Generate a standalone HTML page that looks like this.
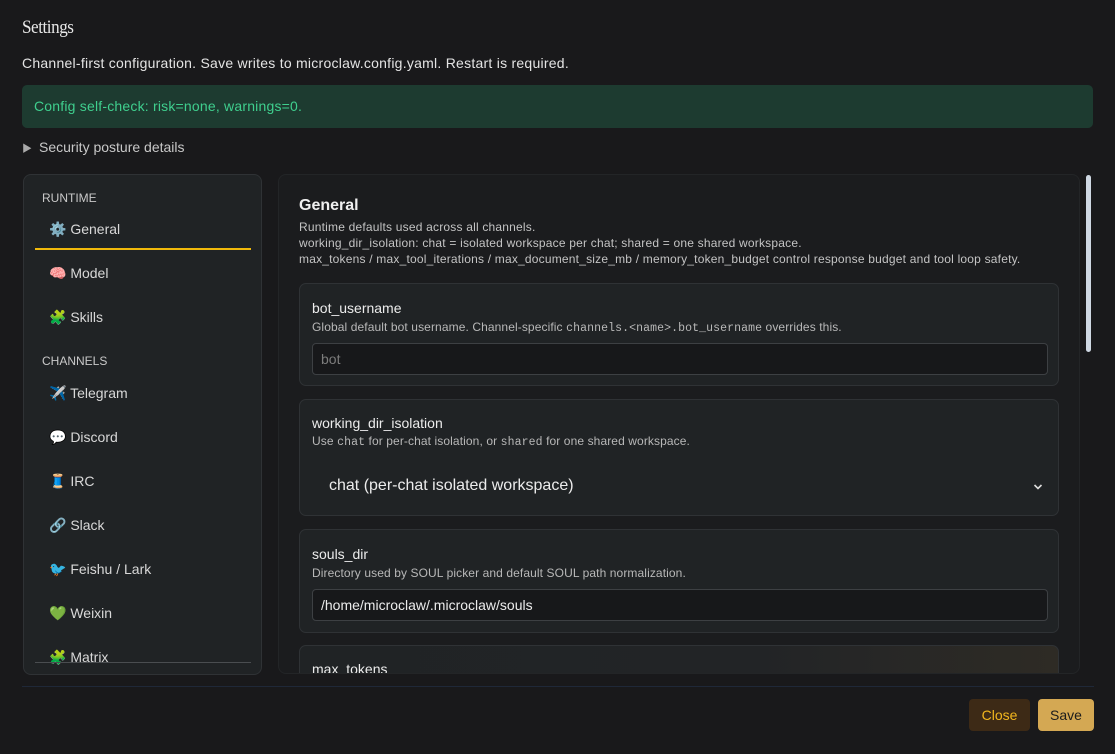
<!DOCTYPE html>
<html><head><meta charset="utf-8"><style>
*{box-sizing:border-box;margin:0;padding:0}
body{width:1115px;height:754px;background:#19191b;font-family:"Liberation Sans","Noto Sans CJK SC",sans-serif;color:#e6e6e6;position:relative;overflow:hidden}
.a{position:absolute}
.title{left:22px;top:17px;font-family:"Liberation Serif",serif;font-size:19px;color:#e8e8e8;letter-spacing:-0.5px;transform:scaleX(0.9);transform-origin:left}
.sub{left:22px;top:55px;font-size:14px;color:#e4e4e4;letter-spacing:0.25px}
.ok{left:22px;top:85px;width:1071px;height:43px;background:#1d3b30;border-radius:5px;color:#3fcf8e;font-size:14px;padding:13px 12px;letter-spacing:0.2px}
.sec{left:22px;top:139px;font-size:14px;color:#c8c8c8}
.side{left:23px;top:174px;width:239px;height:501px;background:#202325;border:1px solid #2f3235;border-radius:8px;overflow:hidden}
.grp{position:absolute;left:18px;font-size:12px;color:#c9c9c9}
.it{position:absolute;left:25px;font-size:14px;color:#d8d8d8;white-space:nowrap}
.main{left:278px;top:174px;width:802px;height:500px;background:#1b1c1e;border:1px solid #232527;border-radius:8px;overflow:hidden}
.card{position:absolute;left:20px;width:760px;background:#202325;border:1px solid #2f3235;border-radius:7px}
.lab{position:absolute;left:12px;font-size:14px;color:#ececec}
.desc{position:absolute;left:12px;font-size:12px;color:#b8b8b8;white-space:nowrap;letter-spacing:0.1px}
code{font-family:"Liberation Mono",monospace;font-size:11.5px}
.inp{position:absolute;left:12px;width:736px;height:32px;background:#17181a;border:1px solid #3d4043;border-radius:4px;font-size:14px;padding:7px 8px}
.btn{height:32px;border-radius:4px;font-size:14px;text-align:center;line-height:32px}
</style></head><body>
<div class="a title">Settings</div>
<div class="a sub">Channel-first configuration. Save writes to microclaw.config.yaml. Restart is required.</div>
<div class="a ok">Config self-check: risk=none, warnings=0.</div>
<div class="a sec"><span style="font-size:10px;color:#aaa;margin-right:7px">&#9654;</span>Security posture details</div>

<div class="a side">
<div class="grp" style="top:16px">RUNTIME</div>
<div class="it" style="top:46px">⚙️ General</div>
<div style="position:absolute;left:11px;top:73px;width:216px;height:2px;background:#f0b90b"></div>
<div class="it" style="top:90px">🧠 Model</div>
<div class="it" style="top:134px">🧩 Skills</div>
<div class="grp" style="top:179px">CHANNELS</div>
<div class="it" style="top:210px">✈️ Telegram</div>
<div class="it" style="top:254px">💬 Discord</div>
<div class="it" style="top:298px">🧵 IRC</div>
<div class="it" style="top:342px">🔗 Slack</div>
<div class="it" style="top:386px">🐦 Feishu / Lark</div>
<div class="it" style="top:430px">💚 Weixin</div>
<div class="it" style="top:474px">🧩 Matrix</div>
<div style="position:absolute;left:11px;top:487px;width:216px;height:1px;background:#4a4d50"></div>
</div>

<div class="a main">
<div style="position:absolute;left:20px;top:22px;font-size:16px;font-weight:bold;color:#f0f0f0">General</div>
<div style="position:absolute;left:20px;top:44px;font-size:12px;line-height:16px;color:#c4c4c4;white-space:nowrap;letter-spacing:0.2px">Runtime defaults used across all channels.<br>working_dir_isolation: chat = isolated workspace per chat; shared = one shared workspace.<br>max_tokens / max_tool_iterations / max_document_size_mb / memory_token_budget control response budget and tool loop safety.</div>
<div class="card" style="top:108px;height:103px">
<div class="lab" style="top:16px">bot_username</div>
<div class="desc" style="top:36px">Global default bot username. Channel-specific <code>channels.&lt;name&gt;.bot_username</code> overrides this.</div>
<div class="inp" style="top:59px;color:#7c7c7c">bot</div>
</div>
<div class="card" style="top:224px;height:117px">
<div class="lab" style="top:15px">working_dir_isolation</div>
<div class="desc" style="top:34px">Use <code>chat</code> for per-chat isolation, or <code>shared</code> for one shared workspace.</div>
<div style="position:absolute;left:29px;top:77px;font-size:16px;color:#ececec">chat (per-chat isolated workspace)</div>
<svg style="position:absolute;left:733px;top:83px" width="10" height="8" viewBox="0 0 10 8"><path d="M1.5 2l3.5 3.5L8.5 2" stroke="#ddd" stroke-width="1.6" fill="none"/></svg>
</div>
<div class="card" style="top:354px;height:104px">
<div class="lab" style="top:16px">souls_dir</div>
<div class="desc" style="top:36px">Directory used by SOUL picker and default SOUL path normalization.</div>
<div class="inp" style="top:59px;color:#ececec">/home/microclaw/.microclaw/souls</div>
</div>
<div class="card" style="top:470px;height:60px;background:linear-gradient(90deg,#202325 0%,#222426 60%,#2e2b25 100%)">
<div class="lab" style="top:15px">max_tokens</div>
</div>
</div>
<div class="a" style="left:1086px;top:175px;width:5px;height:177px;background:#cfd8e3;border-radius:3px"></div>
<div class="a" style="left:22px;top:686px;width:1072px;height:1px;background:#1f2838"></div>
<div class="a btn" style="left:969px;top:699px;width:61px;background:#3d2a16;color:#f2b71e">Close</div>
<div class="a btn" style="left:1038px;top:699px;width:56px;background:#d4a853;color:#1c1c1c">Save</div>
</body></html>
